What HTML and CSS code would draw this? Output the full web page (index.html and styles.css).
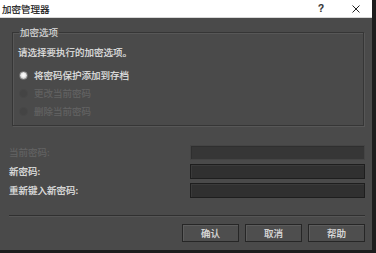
FILE: index.html
```html
<!DOCTYPE html>
<html lang="zh-CN">

<head>
    <meta charset="UTF-8">
    <meta name="viewport" content="width=device-width, initial-scale=1.0">
    <title>加密管理器</title>
    <link rel="stylesheet" href="styles.css">
</head>

<body>
    <div class="window">
        <div class="titlebar">
            <span class="title">加密管理器</span>
            <span class="help">?</span>
            <span class="close">
                <svg width="8" height="8" viewBox="0 0 8 8">
                    <path d="M0.5 0.5 L7.5 7.5 M7.5 0.5 L0.5 7.5" stroke="#222" stroke-width="1" fill="none" />
                </svg>
            </span>
        </div>

        <fieldset class="group">
            <legend>加密选项</legend>
            <p class="hint">请选择要执行的加密选项。</p>
            <ul class="options">
                <li class="option on"><span class="radio"></span>将密码保护添加到存档</li>
                <li class="option off"><span class="radio"></span>更改当前密码</li>
                <li class="option off"><span class="radio"></span>删除当前密码</li>
            </ul>
        </fieldset>

        <div class="fields">
            <span class="field-label off">当前密码:</span>
            <div class="input off"></div>
            <span class="field-label">新密码:</span>
            <div class="input"></div>
            <span class="field-label">重新键入新密码:</span>
            <div class="input"></div>
        </div>

        <div class="separator"></div>

        <div class="buttons">
            <button class="btn">确认</button>
            <button class="btn">取消</button>
            <button class="btn">帮助</button>
        </div>
    </div>
</body>

</html>
```

FILE: styles.css
```css
* {
    margin: 0;
    padding: 0;
    box-sizing: border-box;
}

body {
    width: 376px;
    height: 253px;
    background: #1d1d1d;
    font-family: "Noto Sans CJK SC", "Noto Sans", sans-serif;
    font-size: 9.5px;
    overflow: hidden;
    -webkit-text-stroke: 0.15px currentColor;
}

li {
    list-style: none;
}

.window {
    width: 372px;
    height: 250px;
    background: #4a4a4a;
    color: #e4e4e4;
}

/* 타이틀바 */
.titlebar {
    height: 18px;
    background: #fff;
    color: #111;
    display: flex;
    align-items: center;
    border-bottom: 1px solid #d8d8d8;
}

.title {
    padding-left: 2px;
    line-height: 12px;
}

.help {
    margin-left: auto;
    width: 8px;
    text-align: center;
    font-family: "Liberation Sans", sans-serif;
    font-size: 10px;
    font-weight: bold;
    color: #333;
}

.close {
    width: 8px;
    height: 8px;
    margin-left: 27px;
    margin-right: 12px;
    display: flex;
}

/* 그룹박스 */
.group {
    margin: 8px 8px 0 12px;
    min-width: 0;
    border: 1px solid #363636;
    box-shadow: inset 1px 1px 0 #575757, 1px 1px 0 #575757;
    padding: 8px 5px 5px 5px;
}

.group legend {
    margin-left: 1px;
    padding: 0 1px;
    line-height: 12px;
    color: #d8d8d8;
}

.hint {
    line-height: 12px;
}

.options {
    margin-top: 8px;
}

.option {
    height: 18px;
    display: flex;
    align-items: center;
    gap: 6px;
}

.option.off {
    color: #636363;
}

.radio {
    width: 9px;
    height: 9px;
    margin-left: 1px;
    border-radius: 50%;
    background: #444;
    border: 1px solid #474747;
}

.option.on .radio {
    background: radial-gradient(circle at 50% 45%, #fff 0, #f2f2f2 35%, #bdbdbd 75%, #8a8a8a 100%);
    border-color: #7a7a7a;
}

/* 입력 영역 */
.fields {
    margin: 19px 7px 0 9px;
    display: grid;
    grid-template-columns: 1fr 175px;
    grid-auto-rows: 15px;
    row-gap: 4px;
}

.field-label {
    line-height: 15px;
    color: #e6e6e6;
}

.field-label.off {
    color: #636363;
}

.input {
    background: #303030;
    border: 1px solid #1e1e1e;
    box-shadow: inset 1px 1px 0 #3a3a3a;
}

.input.off {
    background: #363636;
    border-color: #444;
    box-shadow: inset 1px 1px 0 #2f2f2f;
}

.separator {
    margin: 17px 7px 0 9px;
    height: 2px;
    border-top: 1px solid #303030;
    border-bottom: 1px solid #555;
}

/* 버튼 */
.buttons {
    margin: 7px 7px 0 0;
    display: flex;
    justify-content: flex-end;
    gap: 6px;
}

.btn {
    width: 57px;
    height: 18px;
    background: #4e4e4e;
    border: 1px solid #262626;
    box-shadow: inset 1px 1px 0 #5c5c5c;
    color: #e4e4e4;
    font-family: "Noto Sans CJK SC", "Noto Sans", sans-serif;
    font-size: 9.5px;
    line-height: 14px;
    -webkit-text-stroke: 0.15px currentColor;
}
```
